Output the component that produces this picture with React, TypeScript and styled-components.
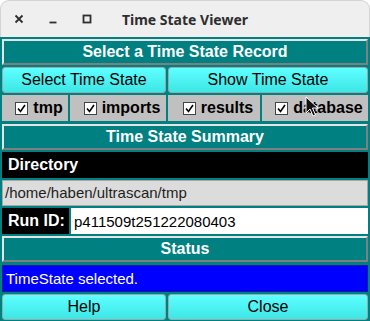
import styled, { createGlobalStyle } from "styled-components";

const GlobalStyle = createGlobalStyle`
  html, body {
    margin: 0;
    padding: 0;
    background: #ffffff;
  }
  * {
    box-sizing: border-box;
  }
`;

const options = ["tmp", "imports", "results", "database"];

const Check = () => (
  <svg width="9" height="9" viewBox="0 0 9 9">
    <path d="M1 4.5 L3.5 7.5 L8 1" fill="none" stroke="#000" strokeWidth="1.6" />
  </svg>
);

const Cursor = () => (
  <svg width="14" height="22" viewBox="0 0 14 22">
    <path
      d="M1 1 L1 17 L5 13 L8 20 L10.5 19 L7.5 12 L13 12 Z"
      fill="#111"
      stroke="#fff"
      strokeWidth="1"
    />
  </svg>
);

const App = () => {
  return (
    <>
      <GlobalStyle />
      <Window>
        <TitleBar>
          <Controls>
            <CtrlIcon>
              <svg width="10" height="10" viewBox="0 0 10 10">
                <path d="M1.5 1.5 L8.5 8.5 M8.5 1.5 L1.5 8.5" stroke="#2e2e2e" strokeWidth="1.8" />
              </svg>
            </CtrlIcon>
            <CtrlIcon>
              <svg width="10" height="10" viewBox="0 0 10 10">
                <path d="M1.5 8.5 L8.5 8.5" stroke="#2e2e2e" strokeWidth="1.8" />
              </svg>
            </CtrlIcon>
            <CtrlIcon>
              <svg width="10" height="10" viewBox="0 0 10 10">
                <rect x="1.5" y="1.5" width="7" height="7" fill="none" stroke="#2e2e2e" strokeWidth="1.8" />
              </svg>
            </CtrlIcon>
          </Controls>
          <Title>Time State Viewer</Title>
        </TitleBar>
        <Body>
          <Banner>Select a Time State Record</Banner>
          <ButtonRow>
            <PushButton>Select Time State</PushButton>
            <PushButton>Show Time State</PushButton>
          </ButtonRow>
          <CheckRow>
            {options.map((o) => (
              <CheckCell key={o}>
                <Box>
                  <Check />
                </Box>
                {o}
              </CheckCell>
            ))}
          </CheckRow>
          <Banner>Time State Summary</Banner>
          <DarkLabel>Directory</DarkLabel>
          <PathField>/home/haben/ultrascan/tmp</PathField>
          <RunRow>
            <DarkLabel>Run ID:</DarkLabel>
            <Input>p411509t251222080403</Input>
          </RunRow>
          <Banner>Status</Banner>
          <StatusLine>TimeState selected.</StatusLine>
          <ButtonRow>
            <PushButton>Help</PushButton>
            <PushButton>Close</PushButton>
          </ButtonRow>
        </Body>
        <Pointer>
          <Cursor />
        </Pointer>
      </Window>
    </>
  );
};

const Window = styled.div`
  position: relative;
  width: 370px;
  height: 321px;
  display: flex;
  flex-direction: column;
  font-family: "Liberation Sans", Arial, sans-serif;
  overflow: hidden;
`;

const TitleBar = styled.div`
  height: 37px;
  flex: none;
  display: flex;
  align-items: center;
  position: relative;
  background: #efefef;
  border: 1px solid #d4d4d4;
  border-bottom: none;
  border-radius: 9px 9px 0 0;
`;

const Controls = styled.div`
  display: flex;
  align-items: center;
  gap: 24px;
  padding-left: 13px;
`;

const CtrlIcon = styled.span`
  width: 10px;
  height: 10px;
  display: flex;
`;

const Title = styled.div`
  position: absolute;
  left: 0;
  right: 0;
  text-align: center;
  font-family: "Noto Sans", "Open Sans", sans-serif;
  font-weight: 700;
  font-size: 14px;
  color: #2e2e2e;
  pointer-events: none;
`;

const Body = styled.div`
  flex: 1;
  background: #008080;
  padding: 2px 2px 0 2px;
  display: flex;
  flex-direction: column;
  gap: 2.2px;
`;

const Banner = styled.div`
  height: 26px;
  flex: none;
  display: flex;
  align-items: center;
  justify-content: center;
  background: #008080;
  border: 2px solid;
  border-color: #e4e4e4 #7f7f7f #7f7f7f #e4e4e4;
  color: #ffffff;
  font-weight: 700;
  font-size: 16px;
`;

const ButtonRow = styled.div`
  height: 26px;
  flex: none;
  display: grid;
  grid-template-columns: 164px 1fr;
  gap: 2px;
`;

const PushButton = styled.div`
  display: flex;
  align-items: center;
  justify-content: center;
  background: linear-gradient(#5effff, #3ee6e6);
  border: 1px solid #9aa8a8;
  border-radius: 3px;
  color: #000000;
  font-size: 16px;
`;

const CheckRow = styled.div`
  height: 26px;
  flex: none;
  display: grid;
  grid-template-columns: 66px 96px 92px 1fr;
  gap: 2px;
`;

const CheckCell = styled.div`
  display: flex;
  align-items: center;
  justify-content: center;
  gap: 5px;
  padding-left: 8px;
  background: #c0c0c0;
  color: #000000;
  font-weight: 700;
  font-size: 16px;
`;

const Box = styled.span`
  width: 13px;
  height: 13px;
  display: flex;
  align-items: center;
  justify-content: center;
  background: #ffffff;
  border: 1px solid #444444;
`;

const DarkLabel = styled.div`
  height: 26px;
  flex: none;
  display: flex;
  align-items: center;
  padding-left: 6px;
  background: #000000;
  color: #ffffff;
  font-weight: 700;
  font-size: 16px;
`;

const PathField = styled.div`
  height: 26px;
  flex: none;
  display: flex;
  align-items: center;
  padding-left: 2px;
  background: #dcdcdc;
  border: 1px solid #a6a6a6;
  color: #1e1e1e;
  font-size: 15px;
`;

const RunRow = styled.div`
  height: 26px;
  flex: none;
  display: grid;
  grid-template-columns: 67px 1fr;
  gap: 2px;
`;

const Input = styled.div`
  display: flex;
  align-items: center;
  padding-left: 3px;
  background: #ffffff;
  color: #000000;
  font-size: 15px;
`;

const StatusLine = styled.div`
  height: 27px;
  flex: none;
  display: flex;
  align-items: center;
  padding-left: 3px;
  background: #0000ff;
  border: 1px solid #1a1aa0;
  color: #ffffff;
  font-size: 15px;
`;

const Pointer = styled.div`
  position: absolute;
  left: 305px;
  top: 96px;
  width: 14px;
  height: 22px;
`;

export default App;
